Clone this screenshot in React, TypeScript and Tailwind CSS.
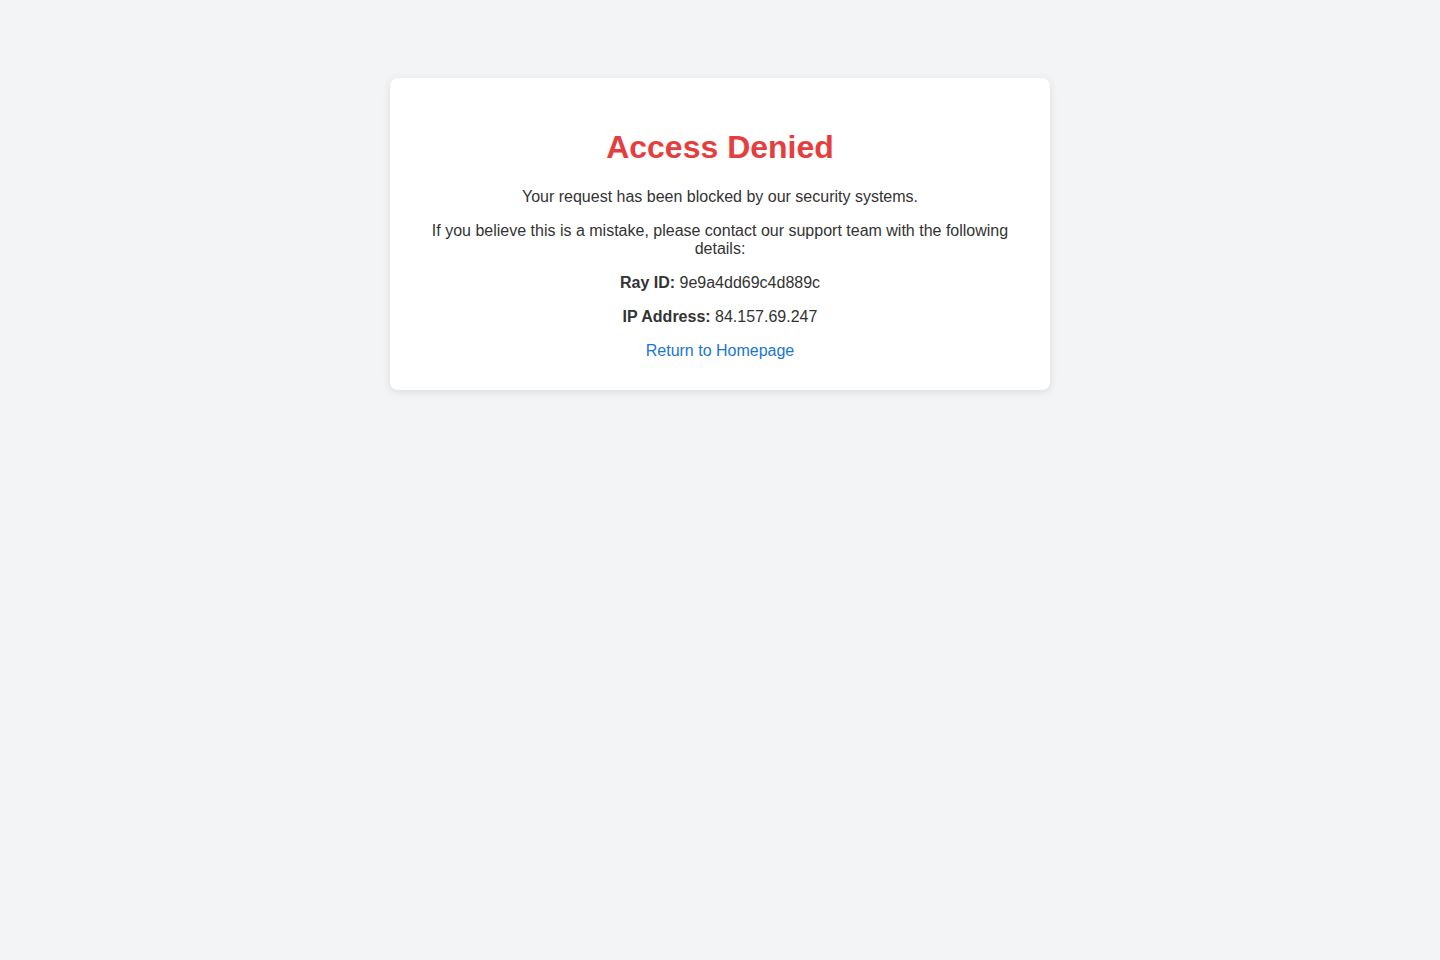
export default function App() {
  return (
    <div
      className="min-h-screen bg-[#f3f4f6] pt-[78px]"
      style={{ fontFamily: '"Liberation Sans", Arial, sans-serif' }}
    >
      <div className="mx-auto w-[660px] rounded-lg bg-white px-[30px] pb-[30px] pt-[51px] text-center text-[16px] leading-[18px] text-[#333] shadow-[0_2px_8px_rgba(0,0,0,0.1)]">
        <h1 className="mb-[22px] text-[32px] font-bold leading-[37px] text-[#e53e3e]">
          Access Denied
        </h1>
        <p className="mb-4">Your request has been blocked by our security systems.</p>
        <p className="mb-4 px-[10px]">
          If you believe this is a mistake, please contact our support team with the following details:
        </p>
        <p className="mb-4">
          <strong>Ray ID:</strong> 9e9a4dd69c4d889c
        </p>
        <p className="mb-4">
          <strong>IP Address:</strong> 84.157.69.247
        </p>
        <p>
          <a href="#" className="text-[#1976d2]">
            Return to Homepage
          </a>
        </p>
      </div>
    </div>
  );
}
